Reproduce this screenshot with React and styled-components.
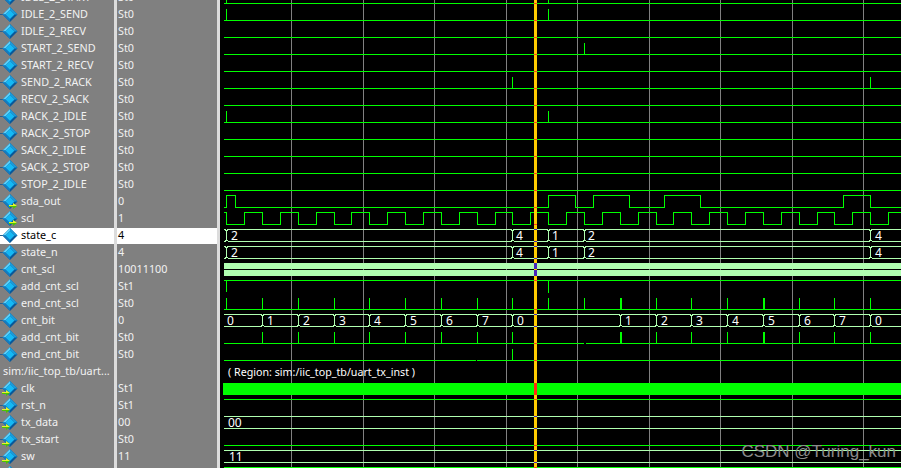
import React from "react";
import styled, { createGlobalStyle } from "styled-components";

const Global = createGlobalStyle`
  html, body { margin: 0; padding: 0; background: #000; overflow: hidden; }
`;

const Screen = styled.div`
  position: relative;
  display: flex;
  width: 901px;
  height: 468px;
  overflow: hidden;
  background: #000;
  font-family: "Noto Sans", "Liberation Sans", Arial, sans-serif;
`;

const Column = styled.div`
  flex: none;
  width: ${(p) => p.$width}px;
  height: 468px;
  overflow: hidden;
  background: #808080;
  border-right: 3px solid #dcdcdc;
`;

const List = styled.div`
  margin-top: -10px;
`;

const Cell = styled.div`
  display: flex;
  align-items: center;
  gap: 3px;
  height: 16px;
  margin-bottom: 1px;
  padding-left: ${(p) => p.$pad}px;
  font-size: 10.8px;
  line-height: 14px;
  white-space: nowrap;
  color: ${(p) => (p.$selected ? "#000" : "#f2f2f2")};
  background: ${(p) => (p.$selected ? "#fff" : "transparent")};
`;

const Label = styled.span`
  margin-top: -2px;
`;

const Wave = styled.svg`
  flex: 1;
  display: block;
  height: 468px;
`;

const WaveLabel = styled.text`
  font-family: "Noto Sans", "Liberation Sans", Arial, sans-serif;
  font-size: ${(p) => p.$size || 12}px;
  fill: #fff;
`;

const Watermark = styled.div`
  position: absolute;
  right: 5px;
  bottom: 6px;
  font-family: "Liberation Sans", Arial, sans-serif;
  font-size: 17px;
  line-height: 20px;
  color: #8c8c8c;
`;

const rows = [
  ["IDLE_2_START", "St0"], ["IDLE_2_SEND", "St0"], ["IDLE_2_RECV", "St0"],
  ["START_2_SEND", "St0"], ["START_2_RECV", "St0"], ["SEND_2_RACK", "St0"],
  ["RECV_2_SACK", "St0"], ["RACK_2_IDLE", "St0"], ["RACK_2_STOP", "St0"],
  ["SACK_2_IDLE", "St0"], ["SACK_2_STOP", "St0"], ["STOP_2_IDLE", "St0"],
  ["sda_out", "0", "right"], ["scl", "1", "right"], ["state_c", "4", null, true],
  ["state_n", "4"], ["cnt_scl", "10011100"], ["add_cnt_scl", "St1"],
  ["end_cnt_scl", "St0"], ["cnt_bit", "0"], ["add_cnt_bit", "St0"],
  ["end_cnt_bit", "St0"], ["sim:/iic_top_tb/uart...", "", "group"],
  ["clk", "St1", "left"], ["rst_n", "St1", "left"], ["tx_data", "00", "left"],
  ["tx_start", "St0", "left"], ["sw", "11", "left"], ["", "", "left"],
];

function SignalIcon({ arrow }) {
  const ax = arrow === "right" ? 9 : 2;
  return (
    <svg width="18" height="16" viewBox="0 0 18 16" style={{ flex: "none", overflow: "visible" }}>
      <path d="M0 7.5H3" stroke="#2a5f8a" strokeWidth="1" />
      <path d="M10 0 L17.5 7.5 L10 15 L2.5 7.5Z" fill="#08599a" />
      <path d="M10 0 L2.5 7.5 L5.5 7.5 L10 3Z" fill="#5ccff8" />
      <path d="M10 0 L17.5 7.5 L14.5 7.5 L10 3Z" fill="#1c9ad8" />
      <path d="M2.5 7.5 L10 15 L10 12 L5.5 7.5Z" fill="#127cc2" />
      <path d="M10 3 L14.5 7.5 L10 12 L5.5 7.5Z" fill="#14b8f4" />
      {arrow && (
        <g>
          <path d={`M${ax} 11H${ax + 4}V9L${ax + 8} 12L${ax + 4} 15V13H${ax}Z`} fill="#4cc400" />
          <path d={`M${ax} 11H${ax + 4}V9L${ax + 8} 12H${ax}Z`} fill="#e4f430" />
        </g>
      )}
    </svg>
  );
}

const G = "#00ff00";
const L = "#b0ffb0";
const C0 = 226.2;
const STEP = 35.78;
const tick = (k) => Math.round(C0 + STEP * k);
const grid = [291, 363, 434, 506, 577, 649, 720, 792, 863];

const flatLines = [3, 20, 37, 54, 71, 88, 105, 122, 139, 156, 173, 190];
const pulses = [
  [3, 226, 0], [3, 548, 0], [20, 226, 9], [20, 548, 9], [54, 584, 43],
  [88, 512, 77], [88, 870, 77], [122, 226, 111], [122, 548, 111],
];

const sda = [226, 235, 548, 575, 593, 629, 664, 700, 843, 870];
function square(edges, low, high, startHigh, end) {
  let level = startHigh;
  let d = `M224 ${(level ? high : low) + 0.5}`;
  edges.forEach((x) => {
    d += ` H${x + 0.5}`;
    level = !level;
    d += ` V${(level ? high : low) + 0.5}`;
  });
  return d + ` H${end}`;
}
const sclEdges = [];
for (let k = 0; k <= 18; k += 1) {
  sclEdges.push(tick(k));
  sclEdges.push(Math.round(C0 + STEP * (k + 0.5)));
}

function bus(top, bottom, xs) {
  const t = top + 0.5;
  const b = bottom + 0.5;
  let d = "";
  let from = 224;
  xs.forEach((x) => {
    const c = x + 0.5;
    d += `M${from} ${t} H${c - 1} L${c} ${t + 2} V${b - 2} L${c - 1} ${b} H${from} `;
    d += `M${c + 1} ${t} L${c} ${t + 2} M${c + 1} ${b} L${c} ${b - 2} `;
    from = c + 1;
  });
  d += `M${from} ${t} H901 M${from} ${b} H901`;
  return d;
}

const endTicks = Array.from({ length: 19 }, (_, k) => tick(k));
const bitKeys = endTicks.filter((x) => x !== 548 && x !== 584);
const bitLabels = ["0", "1", "2", "3", "4", "5", "6", "7", "0", "1", "2", "3", "4", "5", "6", "7", "0"];
const addBitTicks = endTicks.filter((x) => x !== 226 && x !== 548 && x !== 584);

const greenMarks = [...flatLines, 207, 224, 280, 309, 343, 360, 399, 445, 467];
const lightMarks = [229, 241, 246, 258, 314, 326, 416, 428, 450, 462];

const stateLabels = [[231, "2"], [516, "4"], [552, "1"], [588, "2"], [875, "4"]];

function Waveform() {
  return (
    <Wave viewBox="220 0 681 468" width="681" height="468">
      <g stroke="#808080" strokeWidth="1" shapeRendering="crispEdges">
        {grid.map((x) => <path key={x} d={`M${x + 0.5} 0V468`} />)}
      </g>
      <g fill="none" stroke={G} strokeWidth="1" shapeRendering="crispEdges">
        {flatLines.map((y) => <path key={y} d={`M224 ${y + 0.5}H901`} />)}
        {pulses.map(([y, x, top]) => <path key={`${y}-${x}`} d={`M${x + 0.5} ${top}V${y}`} />)}
        <path d={square(sda, 207, 195, false, 901)} />
        <path d={square(sclEdges, 224, 212, true, 901)} />
        <path d="M224 280.5H901M226.5 280V292M548.5 280V293" />
        <path d="M224 309.5H901" />
        {endTicks.map((x) => <path key={x} d={`M${x + 0.5} 298V309`} />)}
        <path d="M224 343.5H584M586 343.5H901" />
        {addBitTicks.map((x) => <path key={x} d={`M${x + 0.5} 332V343`} />)}
        <path d="M224 360.5H476M477 360.5H901M512.5 349V360" />
        <path d="M224 399.5H901M224 445.5H901M224 467.5H901" />
      </g>
      <g fill={G} shapeRendering="crispEdges">
        <rect x="620" y="298" width="2" height="11" />
        <rect x="763" y="298" width="2" height="11" />
        <rect x="620" y="332" width="2" height="11" />
        <rect x="763" y="332" width="2" height="11" />
        <rect x="223" y="383" width="678" height="12" />
      </g>
      <g fill="none" stroke={L} strokeWidth="1" shapeRendering="crispEdges">
        <path d={bus(229, 241, [226, 512, 548, 584, 870])} />
        <path d={bus(246, 258, [226, 512, 548, 584, 870])} />
        <path d={bus(314, 326, bitKeys.slice(1))} />
        <path d="M224 416.5H901M224 428.5H901M224 450.5H901M224 462.5H901" />
      </g>
      <g fill={L} shapeRendering="crispEdges">
        <rect x="224" y="263" width="677" height="6" />
        <rect x="224" y="270" width="677" height="6" />
      </g>
      <g>
        {stateLabels.map(([x, s]) => <WaveLabel key={x} x={x} y={240}>{s}</WaveLabel>)}
        {stateLabels.map(([x, s]) => <WaveLabel key={x} x={x} y={257}>{s}</WaveLabel>)}
        {bitKeys.map((x, i) => (
          <WaveLabel key={x} x={i === 0 ? 227 : x + 5} y={325}>{bitLabels[i]}</WaveLabel>
        ))}
        <WaveLabel x="228" y="376" $size={10.7}>( Region: sim:/iic_top_tb/uart_tx_inst )</WaveLabel>
        <WaveLabel x="228" y="427">00</WaveLabel>
        <WaveLabel x="229" y="461">11</WaveLabel>
      </g>
      <g shapeRendering="crispEdges">
        <rect x="534" y="0" width="3" height="468" fill="#ffcc00" />
        {greenMarks.map((y) => <rect key={y} x="534" y={y} width="3" height="1" fill="#ff3c1e" />)}
        {lightMarks.map((y) => <rect key={y} x="534" y={y} width="3" height="1" fill="#4a28b8" />)}
        <rect x="534" y="263" width="3" height="6" fill="#4a28b8" />
        <rect x="534" y="270" width="3" height="6" fill="#4a28b8" />
        <rect x="534" y="383" width="3" height="12" fill="#ff2a10" />
      </g>
    </Wave>
  );
}

export default function App() {
  return (
    <Screen>
      <Global />
      <Column $width={114}>
        <List>
          {rows.map(([name, , kind, selected], i) => (
            <Cell key={i} $pad={kind === "group" ? 3 : 0} $selected={selected}>
              {kind !== "group" && <SignalIcon arrow={kind} />}
              <Label>{name}</Label>
            </Cell>
          ))}
        </List>
      </Column>
      <Column $width={100}>
        <List>
          {rows.map(([name, value, , selected], i) => (
            <Cell key={i} $pad={1} $selected={selected}><Label>{value}</Label></Cell>
          ))}
        </List>
      </Column>
      <Waveform />
      <Watermark>CSDN @Turing_kun</Watermark>
    </Screen>
  );
}
